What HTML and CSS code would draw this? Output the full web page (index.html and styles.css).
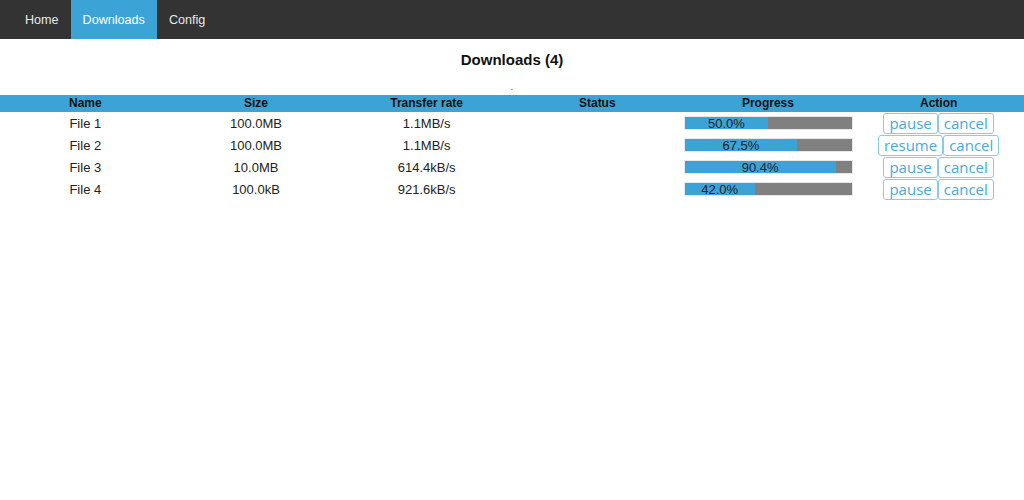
FILE: index.html
```html
<!DOCTYPE html>
<html>
<head>
<meta charset="utf-8">
<link rel="stylesheet" href="styles.css">
</head>
<body>
<nav class="nav">
  <a class="nav-item">Home</a>
  <a class="nav-item active">Downloads</a>
  <a class="nav-item">Config</a>
</nav>
<h1 class="title">Downloads (4)</h1>
<div class="dot">.</div>
<table class="dl">
  <thead>
    <tr><th>Name</th><th>Size</th><th>Transfer rate</th><th>Status</th><th>Progress</th><th>Action</th></tr>
  </thead>
  <tbody>
    <tr><td>File 1</td><td>100.0MB</td><td>1.1MB/s</td><td></td>
      <td><div class="bar"><div class="fill" style="width:50%">50.0%</div></div></td>
      <td><button class="btn">pause</button><button class="btn">cancel</button></td></tr>
    <tr><td>File 2</td><td>100.0MB</td><td>1.1MB/s</td><td></td>
      <td><div class="bar"><div class="fill" style="width:67.5%">67.5%</div></div></td>
      <td><button class="btn">resume</button><button class="btn">cancel</button></td></tr>
    <tr><td>File 3</td><td>10.0MB</td><td>614.4kB/s</td><td></td>
      <td><div class="bar"><div class="fill" style="width:90.4%">90.4%</div></div></td>
      <td><button class="btn">pause</button><button class="btn">cancel</button></td></tr>
    <tr><td>File 4</td><td>100.0kB</td><td>921.6kB/s</td><td></td>
      <td><div class="bar"><div class="fill" style="width:42%">42.0%</div></div></td>
      <td><button class="btn">pause</button><button class="btn">cancel</button></td></tr>
  </tbody>
</table>
</body>
</html>
```
FILE: styles.css
```css
html, body {
  margin: 0;
  padding: 0;
  background: #fff;
  font-family: "Liberation Sans", Arial, sans-serif;
  font-size: 13px;
  color: #222;
}
.nav {
  display: flex;
  background: #333;
  height: 39px;
  padding-left: 13px;
}
.nav-item {
  display: flex;
  align-items: center;
  padding: 0 12px;
  color: #e8e8e8;
  font-size: 12.6px;
}
.nav-item.active {
  background: #3ca3d6;
  color: #fff;
}
.title {
  margin: 0;
  padding-top: 12px;
  text-align: center;
  font-size: 15px;
  font-weight: bold;
  color: #111;
  line-height: 17px;
}
.dot {
  text-align: center;
  font-size: 10px;
  line-height: 12px;
  margin-top: 13px;
  color: #555;
}
.dl {
  width: 100%;
  border-collapse: collapse;
  table-layout: fixed;
  margin-top: 2px;
}
.dl th {
  background: #3ca3d6;
  color: #111;
  font-size: 12px;
  font-weight: bold;
  height: 17px;
  padding: 0;
  line-height: 17px;
}
.dl td {
  text-align: center;
  padding: 0 1px;
  height: 22px;
  color: #222;
}
.bar {
  height: 14px;
  background: #808080;
  border: 1px solid #e8e8e8;
  box-sizing: border-box;
  width: 169px;
}
.fill {
  height: 100%;
  background: #3ca3d6;
  text-align: center;
  font-size: 13px;
  line-height: 13px;
  color: #222;
  white-space: nowrap;
}
.btn {
  font-family: "Open Sans", "DejaVu Sans", sans-serif;
  font-size: 15px;
  color: #4aa8da;
  background: #fff;
  border: 1px solid #8cc8e8;
  border-radius: 3px;
  padding: 0 5px;
  height: 21px;
  line-height: 18px;
  margin: 0;
  vertical-align: middle;
}
```
